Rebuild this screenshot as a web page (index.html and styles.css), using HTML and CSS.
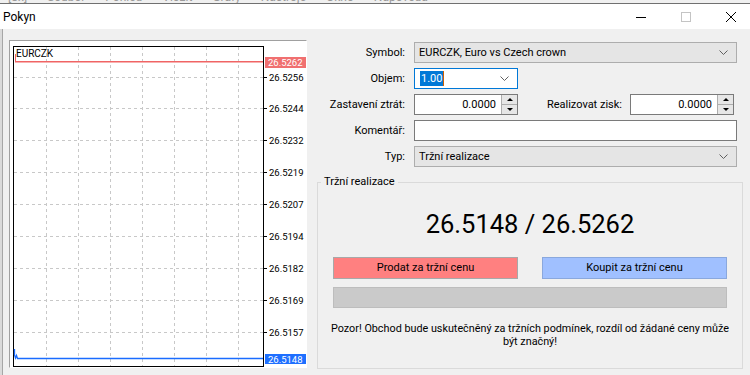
FILE: index.html
```html
<!DOCTYPE html>
<html lang="cs">
<head>
    <meta charset="UTF-8">
    <meta name="viewport" content="width=device-width, initial-scale=1.0">
    <title>Pokyn</title>
    <link rel="stylesheet" href="styles.css">
</head>
<body>
    <div class="menu-strip">
        <span>[8x]</span><span>Soubor</span><span>Pohled</span><span>Vložit</span><span>Grafy</span><span>Nástroje</span><span>Okno</span><span>Nápověda</span>
    </div>

    <div class="titlebar">
        <div class="title">Pokyn</div>
        <div class="tb-btn">
            <svg width="10" height="10" viewBox="0 0 10 10"><path d="M0 5.5 H10" stroke="#000" fill="none"/></svg>
        </div>
        <div class="tb-btn">
            <svg width="10" height="10" viewBox="0 0 10 10"><rect x="0.5" y="0.5" width="9" height="9" stroke="#c4c4c4" fill="none"/></svg>
        </div>
        <div class="tb-btn close">
            <svg width="10" height="10" viewBox="0 0 10 10"><path d="M0 0 L10 10 M10 0 L0 10" stroke="#000" fill="none"/></svg>
        </div>
    </div>

    <div class="content">
        <div class="chart-panel">
            <svg class="chart" width="296" height="326" viewBox="0 0 296 326">
                <rect x="3.5" y="5.5" width="250" height="320" fill="#fff" stroke="#000"/>
                <g stroke="#c8c8c8" stroke-dasharray="3 3" fill="none">
                    <path d="M36.5 6 V325 M68.5 6 V325 M100.5 6 V325 M132.5 6 V325 M164.5 6 V325 M196.5 6 V325 M228.5 6 V325"/>
                    <path d="M4 36.5 H253 M4 67.5 H253 M4 99.5 H253 M4 131.5 H253 M4 163.5 H253 M4 195.5 H253 M4 227.5 H253 M4 259.5 H253 M4 291.5 H253"/>
                </g>
                <g stroke="#000">
                    <path d="M253 36.5 H257 M253 67.5 H257 M253 99.5 H257 M253 131.5 H257 M253 163.5 H257 M253 195.5 H257 M253 227.5 H257 M253 259.5 H257 M253 291.5 H257"/>
                </g>
                <g class="axis">
                    <text x="259" y="40">26.5256</text>
                    <text x="259" y="71">26.5244</text>
                    <text x="259" y="103">26.5232</text>
                    <text x="259" y="135">26.5219</text>
                    <text x="259" y="167">26.5207</text>
                    <text x="259" y="199">26.5194</text>
                    <text x="259" y="231">26.5182</text>
                    <text x="259" y="263">26.5169</text>
                    <text x="259" y="295">26.5157</text>
                </g>

                <g fill="#f06464">
                    <rect x="5" y="13" width="1" height="8"/>
                    <rect x="5" y="20" width="248" height="1.5"/>
                </g>
                <rect x="255" y="16" width="41" height="11" fill="#f07070"/>
                <text class="tag" x="258" y="25">26.5262</text>

                <polyline points="4.5,308 4.5,314 5.5,317 6.5,314.5 7.5,317.5 253,317.5" fill="none" stroke="#1a6cff" stroke-width="1.3"/>
                <rect x="255" y="313" width="41" height="10" fill="#1e6fff"/>
                <text class="tag" x="258" y="321.5">26.5148</text>

                <text class="sym" x="6" y="15.5">EURCZK</text>
            </svg>
        </div>

        <div class="side">
            <div class="form">
                <label>Symbol:</label>
                <div class="combo gray">
                    <span>EURCZK, Euro vs Czech crown</span>
                    <svg width="9" height="5" viewBox="0 0 9 5"><path d="M0.5 0.5 L4.5 4.5 L8.5 0.5" fill="none" stroke="#606060"/></svg>
                </div>

                <label>Objem:</label>
                <div class="ctl">
                    <div class="combo focus">
                        <span><span class="selected">1.00</span></span>
                        <svg width="9" height="5" viewBox="0 0 9 5"><path d="M0.5 0.5 L4.5 4.5 L8.5 0.5" fill="none" stroke="#606060"/></svg>
                    </div>
                </div>

                <label>Zastavení ztrát:</label>
                <div class="pair">
                    <div class="spin">
                        <span class="val">0.0000</span>
                        <div class="spin-btns"><span><i class="up"></i></span><span><i class="down"></i></span></div>
                    </div>
                    <label class="mid">Realizovat zisk:</label>
                    <div class="spin">
                        <span class="val">0.0000</span>
                        <div class="spin-btns"><span><i class="up"></i></span><span><i class="down"></i></span></div>
                    </div>
                </div>

                <label>Komentář:</label>
                <div class="textbox"></div>

                <label>Typ:</label>
                <div class="combo gray">
                    <span>Tržní realizace</span>
                    <svg width="9" height="5" viewBox="0 0 9 5"><path d="M0.5 0.5 L4.5 4.5 L8.5 0.5" fill="none" stroke="#606060"/></svg>
                </div>
            </div>

            <fieldset class="group">
                <legend>Tržní realizace</legend>
                <div class="price">26.5148 / 26.5262</div>
                <div class="actions">
                    <div class="btn sell">Prodat za tržní cenu</div>
                    <div class="btn buy">Koupit za tržní cenu</div>
                </div>
                <div class="progress"></div>
                <p class="note">Pozor! Obchod bude uskutečněný za tržních podmínek, rozdíl od žádané ceny může být značný!</p>
            </fieldset>
        </div>
    </div>
</body>
</html>
```

FILE: styles.css
```css
* {
    margin: 0;
    padding: 0;
    box-sizing: border-box;
}

body {
    width: 750px;
    height: 375px;
    overflow: hidden;
    background: #f0f0f0;
    font-family: Roboto, "Liberation Sans", sans-serif;
    font-size: 11px;
    color: #000;
}

/* window chrome */

.menu-strip {
    height: 3px;
    overflow: hidden;
    background: #f0f0f0;
    display: flex;
    gap: 20px;
    padding-left: 8px;
    color: #9a9a9a;
    font-size: 12px;
    line-height: 12px;
}

.menu-strip span {
    margin-top: -9px;
}

.titlebar {
    height: 26px;
    background: #fff;
    border-top: 1px solid #707070;
    display: flex;
    align-items: center;
}

.title {
    flex: 1;
    padding-left: 3px;
    font-size: 12px;
}

.tb-btn {
    width: 45px;
    height: 25px;
    display: flex;
    align-items: center;
    justify-content: center;
}

.tb-btn.close {
    margin-right: -4px;
    width: 46px;
}

.content {
    display: flex;
    height: 346px;
    padding: 11px 0 0 9px;
    box-shadow: inset 2px 0 0 #dadada, inset 3px 0 0 #a6a6a6;
}

/* chart */

.chart-panel {
    width: 298px;
    height: 328px;
    background: #fff;
    border: 1px solid;
    border-color: #a0a0a0 #fff #fff #a0a0a0;
}

.chart {
    display: block;
}

.chart text {
    font-family: Roboto, "Liberation Sans", sans-serif;
    font-size: 9.5px;
    fill: #000;
}

.chart .tag {
    fill: #fff;
}

.chart .sym {
    font-size: 10px;
}

/* order form */

.side {
    flex: 1;
    padding: 2px 7px 0 3px;
}

.form {
    display: grid;
    grid-template-columns: 95px 1fr;
    grid-auto-rows: 21px;
    column-gap: 9px;
    row-gap: 5px;
    margin-right: 6px;
}

.form label {
    display: flex;
    align-items: center;
    justify-content: flex-end;
}

.combo {
    display: flex;
    align-items: center;
    justify-content: space-between;
    padding: 0 8px 0 4px;
    border: 1px solid #adadad;
    background: #fff;
}

.combo.gray {
    background: #e5e5e5;
}

.combo.focus {
    width: 104px;
    height: 21px;
    border-color: #0078d7;
    padding-left: 5px;
}

.selected {
    background: #0078d7;
    color: #fff;
    padding: 1px 1px;
    border-right: 1px solid #d06000;
}

.pair {
    display: flex;
    margin-right: 3px;
}

.pair .mid {
    flex: 1;
    padding-right: 8px;
}

.spin {
    width: 104px;
    display: flex;
    border: 1px solid #7a7a7a;
    background: #fff;
}

.spin .val {
    flex: 1;
    display: flex;
    align-items: center;
    justify-content: flex-end;
    padding-right: 5px;
}

.spin-btns {
    width: 16px;
    display: flex;
    flex-direction: column;
    border-left: 1px solid #adadad;
}

.spin-btns span {
    flex: 1;
    display: flex;
    align-items: center;
    justify-content: center;
    background: #e6e6e6;
}

.spin-btns span:first-child {
    border-bottom: 1px solid #adadad;
}

.up {
    border-left: 3px solid transparent;
    border-right: 3px solid transparent;
    border-bottom: 3px solid #000;
}

.down {
    border-left: 3px solid transparent;
    border-right: 3px solid transparent;
    border-top: 3px solid #000;
}

.textbox {
    border: 1px solid #7a7a7a;
    background: #fff;
}

/* market execution group */

.group {
    margin: 8px 0 0 7px;
    height: 194px;
    border: 1px solid #dadada;
    padding: 0 15px;
}

.group legend {
    margin-left: -12px;
    padding: 0 3px;
    font-size: 11px;
    line-height: 14px;
}

.price {
    margin-top: 20px;
    height: 30px;
    line-height: 30px;
    text-align: center;
    font-size: 25.5px;
}

.actions {
    display: flex;
    justify-content: space-between;
    margin: 18px 0 0;
}

.btn {
    width: 185px;
    height: 22px;
    line-height: 20px;
    text-align: center;
}

.sell {
    background: #ff8080;
    border: 1px solid #a8a8a8;
}

.buy {
    background: #a0c0ff;
    border: 1px solid #8aa8dd;
}

.progress {
    margin-top: 8px;
    height: 21px;
    background: #cacaca;
    border: 1px solid #bdbdbd;
}

.note {
    margin: 15px -8px 0;
    text-align: center;
    font-size: 10.8px;
    line-height: 12.5px;
}
```
